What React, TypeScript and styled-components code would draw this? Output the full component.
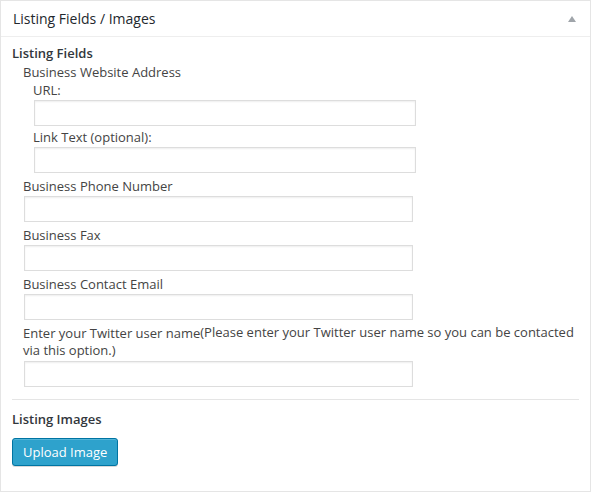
import styled, { createGlobalStyle } from "styled-components";

const GlobalStyle = createGlobalStyle`
  html, body {
    margin: 0;
    padding: 0;
    background: #fff;
  }
  body {
    font-family: "Open Sans", "Noto Sans", sans-serif;
    color: #444;
  }
`;

const Panel = styled.div`
  box-sizing: border-box;
  width: 591px;
  height: 492px;
  border: 1px solid #e5e5e5;
  box-shadow: 0 1px 1px rgba(0, 0, 0, 0.04);
  background: #fff;
`;

const Header = styled.div`
  height: 35px;
  padding: 0 14px 0 12px;
  display: flex;
  align-items: center;
  justify-content: space-between;
  border-bottom: 1px solid #eee;
`;

const Title = styled.h3`
  margin: 0;
  font-size: 14px;
  font-weight: 400;
  line-height: 20px;
  color: #23282d;
`;

const Toggle = styled.svg`
  width: 8px;
  height: 6px;
  margin-top: 1px;
`;

const Body = styled.div`
  padding: 6px 11px 0;
`;

const Heading = styled.h4`
  margin: 0;
  font-size: 13px;
  font-weight: 600;
  line-height: 20px;
  color: #32373c;
`;

const Group = styled.div<{ $indent: number; $gap: number }>`
  padding-left: ${(p) => p.$indent}px;
  margin-bottom: ${(p) => p.$gap}px;
`;

const Label = styled.label`
  display: block;
  font-size: 13px;
  line-height: 18px;
  color: #444;
`;

const Hint = styled.span`
  line-height: 16px;
  vertical-align: 1px;
`;

const Input = styled.input<{ $w: number }>`
  box-sizing: border-box;
  display: block;
  width: ${(p) => p.$w}px;
  height: 26px;
  margin: 1px 0 0 1px;
  padding: 3px 5px;
  border: 1px solid #ddd;
  box-shadow: inset 0 1px 2px rgba(0, 0, 0, 0.07);
  background: #fff;
  font: 13px "Open Sans", sans-serif;
  outline: none;
`;

const Divider = styled.hr`
  margin: 12px 0 9px;
  border: 0;
  border-top: 1px solid #e5e5e5;
  height: 0;
`;

const Button = styled.button`
  margin-top: 9px;
  height: 28px;
  padding: 0 10px;
  border: 1px solid #0074a2;
  border-radius: 3px;
  background: #2ea2cc;
  box-shadow: inset 0 1px 0 rgba(120, 200, 230, 0.5), 0 1px 0 rgba(0, 0, 0, 0.15);
  color: #fff;
  font-family: "Open Sans", sans-serif;
  font-size: 13px;
  line-height: 26px;
  cursor: pointer;
`;

const fields = [
  { label: "Business Phone Number" },
  { label: "Business Fax" },
  { label: "Business Contact Email" },
];

export default function App() {
  return (
    <>
      <GlobalStyle />
      <Panel>
        <Header>
          <Title>Listing Fields / Images</Title>
          <Toggle viewBox="0 0 8 6">
            <polygon points="4,0 8,6 0,6" fill="#a0a5aa" />
          </Toggle>
        </Header>
        <Body>
          <Heading>Listing Fields</Heading>
          <Group $indent={11} $gap={4}>
            <Label>Business Website Address</Label>
            <Group $indent={10} $gap={2}>
              <Label>URL:</Label>
              <Input $w={382} type="text" />
            </Group>
            <Group $indent={10} $gap={0}>
              <Label>Link Text (optional):</Label>
              <Input $w={382} type="text" />
            </Group>
          </Group>
          {fields.map((f) => (
            <Group key={f.label} $indent={11} $gap={4}>
              <Label>{f.label}</Label>
              <Input $w={389} type="text" />
            </Group>
          ))}
          <Group $indent={11} $gap={0}>
            <Label>
              Enter your Twitter user name
              <Hint>(Please enter your Twitter user name so you can be contacted via this option.)</Hint>
            </Label>
            <Input $w={389} type="text" />
          </Group>
          <Divider />
          <Heading>Listing Images</Heading>
          <Button type="button">Upload Image</Button>
        </Body>
      </Panel>
    </>
  );
}
